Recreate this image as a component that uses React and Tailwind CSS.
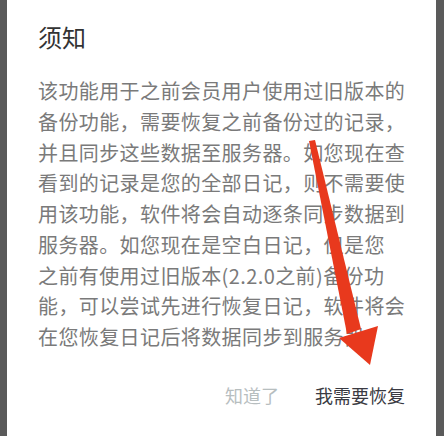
const lines = [
  "该功能用于之前会员用户使用过旧版本的",
  "备份功能，需要恢复之前备份过的记录，",
  "并且同步这些数据至服务器。如您现在查",
  "看到的记录是您的全部日记，则不需要使",
  "用该功能，软件将会自动逐条同步数据到",
  "服务器。如您现在是空白日记，但是您",
  "之前有使用过旧版本(2.2.0之前)备份功",
  "能，可以尝试先进行恢复日记，软件将会",
  "在您恢复日记后将数据同步到服务器。",
];

const Arrow = () => (
  <svg
    className="pointer-events-none absolute left-0 top-0"
    width="444"
    height="436"
    viewBox="0 0 444 436"
  >
    <polygon points="309,141 315,140 361,329 347,334" fill="#e8391d" />
    <polygon points="339,338 378,326 370,365" fill="#e8391d" />
  </svg>
);

const App = () => {
  return (
    <div
      className="relative flex h-[436px] w-[444px] bg-[#5a5a5a]"
      style={{ fontFamily: '"Noto Sans CJK SC", "Noto Sans", sans-serif' }}
    >
      <div className="ml-[7px] flex w-[429px] flex-col bg-white pl-[31px] pr-[31px] pt-[25px]">
        <h1 className="text-[24px] leading-[24px] font-normal text-[#333333]">须知</h1>
        <div className="mt-[27px] text-[20px] leading-[30.75px] tracking-[0.4px] text-[#7a7a7a]">
          {lines.map((l) => (
            <div key={l} className="whitespace-nowrap">
              {l}
            </div>
          ))}
        </div>
        <div className="mt-[33px] flex justify-end gap-[36px] text-[18px] leading-[18px]">
          <span className="text-[#b7bebf]">知道了</span>
          <span className="text-[#3a3a42]">我需要恢复</span>
        </div>
      </div>
      <Arrow />
    </div>
  );
};

export default App;
